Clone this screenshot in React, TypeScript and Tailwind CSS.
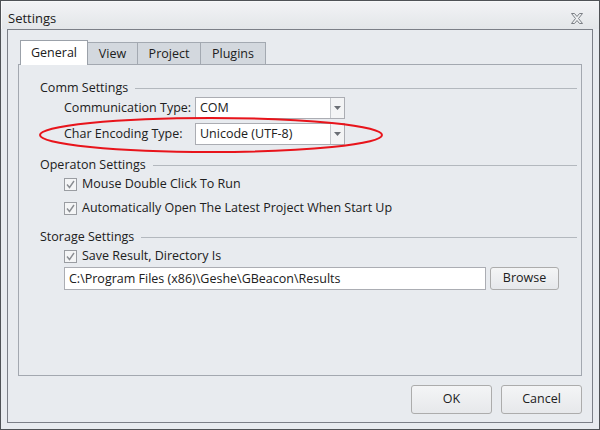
import React from "react";

const Combo: React.FC<{ value: string }> = ({ value }) => (
  <div className="flex h-[22px] w-[150px] shrink-0 border border-[#abadb3] bg-white">
    <div className="flex-1 pl-[4px] leading-[20px]">{value}</div>
    <div className="flex w-[14px] items-center justify-center border-l border-[#c5c8cc] bg-[#f3f4f5]">
      <svg width="7" height="4" viewBox="0 0 7 4">
        <path d="M0 0h7L3.5 4z" fill="#6b6f75" />
      </svg>
    </div>
  </div>
);

const Check: React.FC<{ label: string }> = ({ label }) => (
  <div className="flex h-[20px] items-center gap-[5px]">
    <div className="flex h-[13px] w-[13px] items-center justify-center border border-[#9a9da2] bg-[#f4f5f6]">
      <svg width="9" height="9" viewBox="0 0 9 9">
        <path d="M1 4.5l2.5 3L8 1" fill="none" stroke="#8a8d92" strokeWidth="1.4" />
      </svg>
    </div>
    <span>{label}</span>
  </div>
);

const GroupTitle: React.FC<{ title: string }> = ({ title }) => (
  <div className="flex h-[18px] items-center gap-[7px]">
    <span>{title}</span>
    <div className="h-px flex-1 bg-[#b3b8be]" />
  </div>
);

const tabs = [
  { name: "General", w: "w-[68px]", active: true },
  { name: "View", w: "w-[50px]", active: false },
  { name: "Project", w: "w-[63px]", active: false },
  { name: "Plugins", w: "w-[65px]", active: false },
];

export default function App() {
  return (
    <div
      className="relative flex h-[430px] w-[600px] flex-col whitespace-nowrap border border-[#4f5256] bg-[#e8ebef] text-[12.5px] text-[#202020]"
      style={{ fontFamily: '"Open Sans", "Noto Sans", sans-serif' }}
    >
      {/* title bar */}
      <div className="flex h-[28px] items-center justify-between border-t border-l border-white/70 bg-gradient-to-b from-[#f2f3f5] to-[#e3e6e9] pl-[6px] pr-[16px] pt-[6px]">
        <span className="text-[13px]">Settings</span>
        <svg width="12" height="11" viewBox="0 0 12 11">
          <path
            d="M0.5 0.5h3l2.5 3 2.5-3h3l-4 5 4 5h-3l-2.5-3-2.5 3h-3l4-5z"
            fill="#eef0f2"
            stroke="#7b7f85"
            strokeWidth="1"
          />
        </svg>
      </div>

      <div className="mx-[6px] mb-[6px] flex flex-1 flex-col border border-[#7b7f87] px-[10px] pt-[10px]">
        {/* tabs */}
        <div className="flex h-[24px] items-end pl-[2px]">
          {tabs.map((t) =>
            t.active ? (
              <div
                key={t.name}
                className={`${t.w} relative z-10 mb-[-1px] flex h-[25px] items-center justify-center border border-b-0 border-[#9ba1a9] bg-white`}
              >
                {t.name}
              </div>
            ) : (
              <div
                key={t.name}
                className={`${t.w} flex h-[22px] items-center justify-center border border-l-0 border-b-0 border-[#a3a9b1] bg-[#d3d8de] pt-[1px]`}
              >
                {t.name}
              </div>
            )
          )}
        </div>

        {/* panel */}
        <div className="flex h-[312px] flex-col border border-[#a3a8b0] pl-[21px] pr-[4px] pt-[14px]">
          <GroupTitle title="Comm Settings" />
          <div className="flex flex-col gap-[4px] pl-[24px]">
            <div className="flex items-center">
              <span className="w-[131px] shrink-0">Communication Type:</span>
              <Combo value="COM" />
            </div>
            <div className="flex items-center">
              <span className="w-[131px] shrink-0">Char Encoding Type:</span>
              <Combo value="Unicode (UTF-8)" />
            </div>
          </div>

          <div className="mt-[11px]">
            <GroupTitle title="Operaton Settings" />
          </div>
          <div className="flex flex-col gap-[4px] pl-[24px]">
            <Check label="Mouse Double Click To Run" />
            <Check label="Automatically Open The Latest Project When Start Up" />
          </div>

          <div className="mt-[10px]">
            <GroupTitle title="Storage Settings" />
          </div>
          <div className="flex flex-col pl-[24px]">
            <Check label="Save Result, Directory Is" />
            <div className="mt-[1px] flex gap-[4px]">
              <div className="h-[23px] w-[422px] border border-[#abadb3] bg-white pl-[4px] leading-[21px]">
                C:\Program Files (x86)\Geshe\GBeacon\Results
              </div>
              <button className="h-[23px] w-[69px] rounded-[3px] border border-[#acacac] bg-gradient-to-b from-[#f4f5f6] to-[#e6e8eb]">
                Browse
              </button>
            </div>
          </div>
        </div>

        {/* buttons */}
        <div className="mt-[9px] flex justify-end gap-[9px]">
          <button className="h-[29px] w-[81px] rounded-[3px] border border-[#acacac] bg-gradient-to-b from-[#f4f5f6] to-[#e6e8eb]">
            OK
          </button>
          <button className="h-[29px] w-[81px] rounded-[3px] border border-[#acacac] bg-gradient-to-b from-[#f4f5f6] to-[#e6e8eb]">
            Cancel
          </button>
        </div>
      </div>

      {/* red annotation ellipse */}
      <svg
        className="pointer-events-none absolute left-[36px] top-[114px]"
        width="350"
        height="40"
        viewBox="0 0 350 40"
      >
        <ellipse cx="174" cy="20" rx="171" ry="17" fill="none" stroke="#e8141b" strokeWidth="2" />
      </svg>
    </div>
  );
}
